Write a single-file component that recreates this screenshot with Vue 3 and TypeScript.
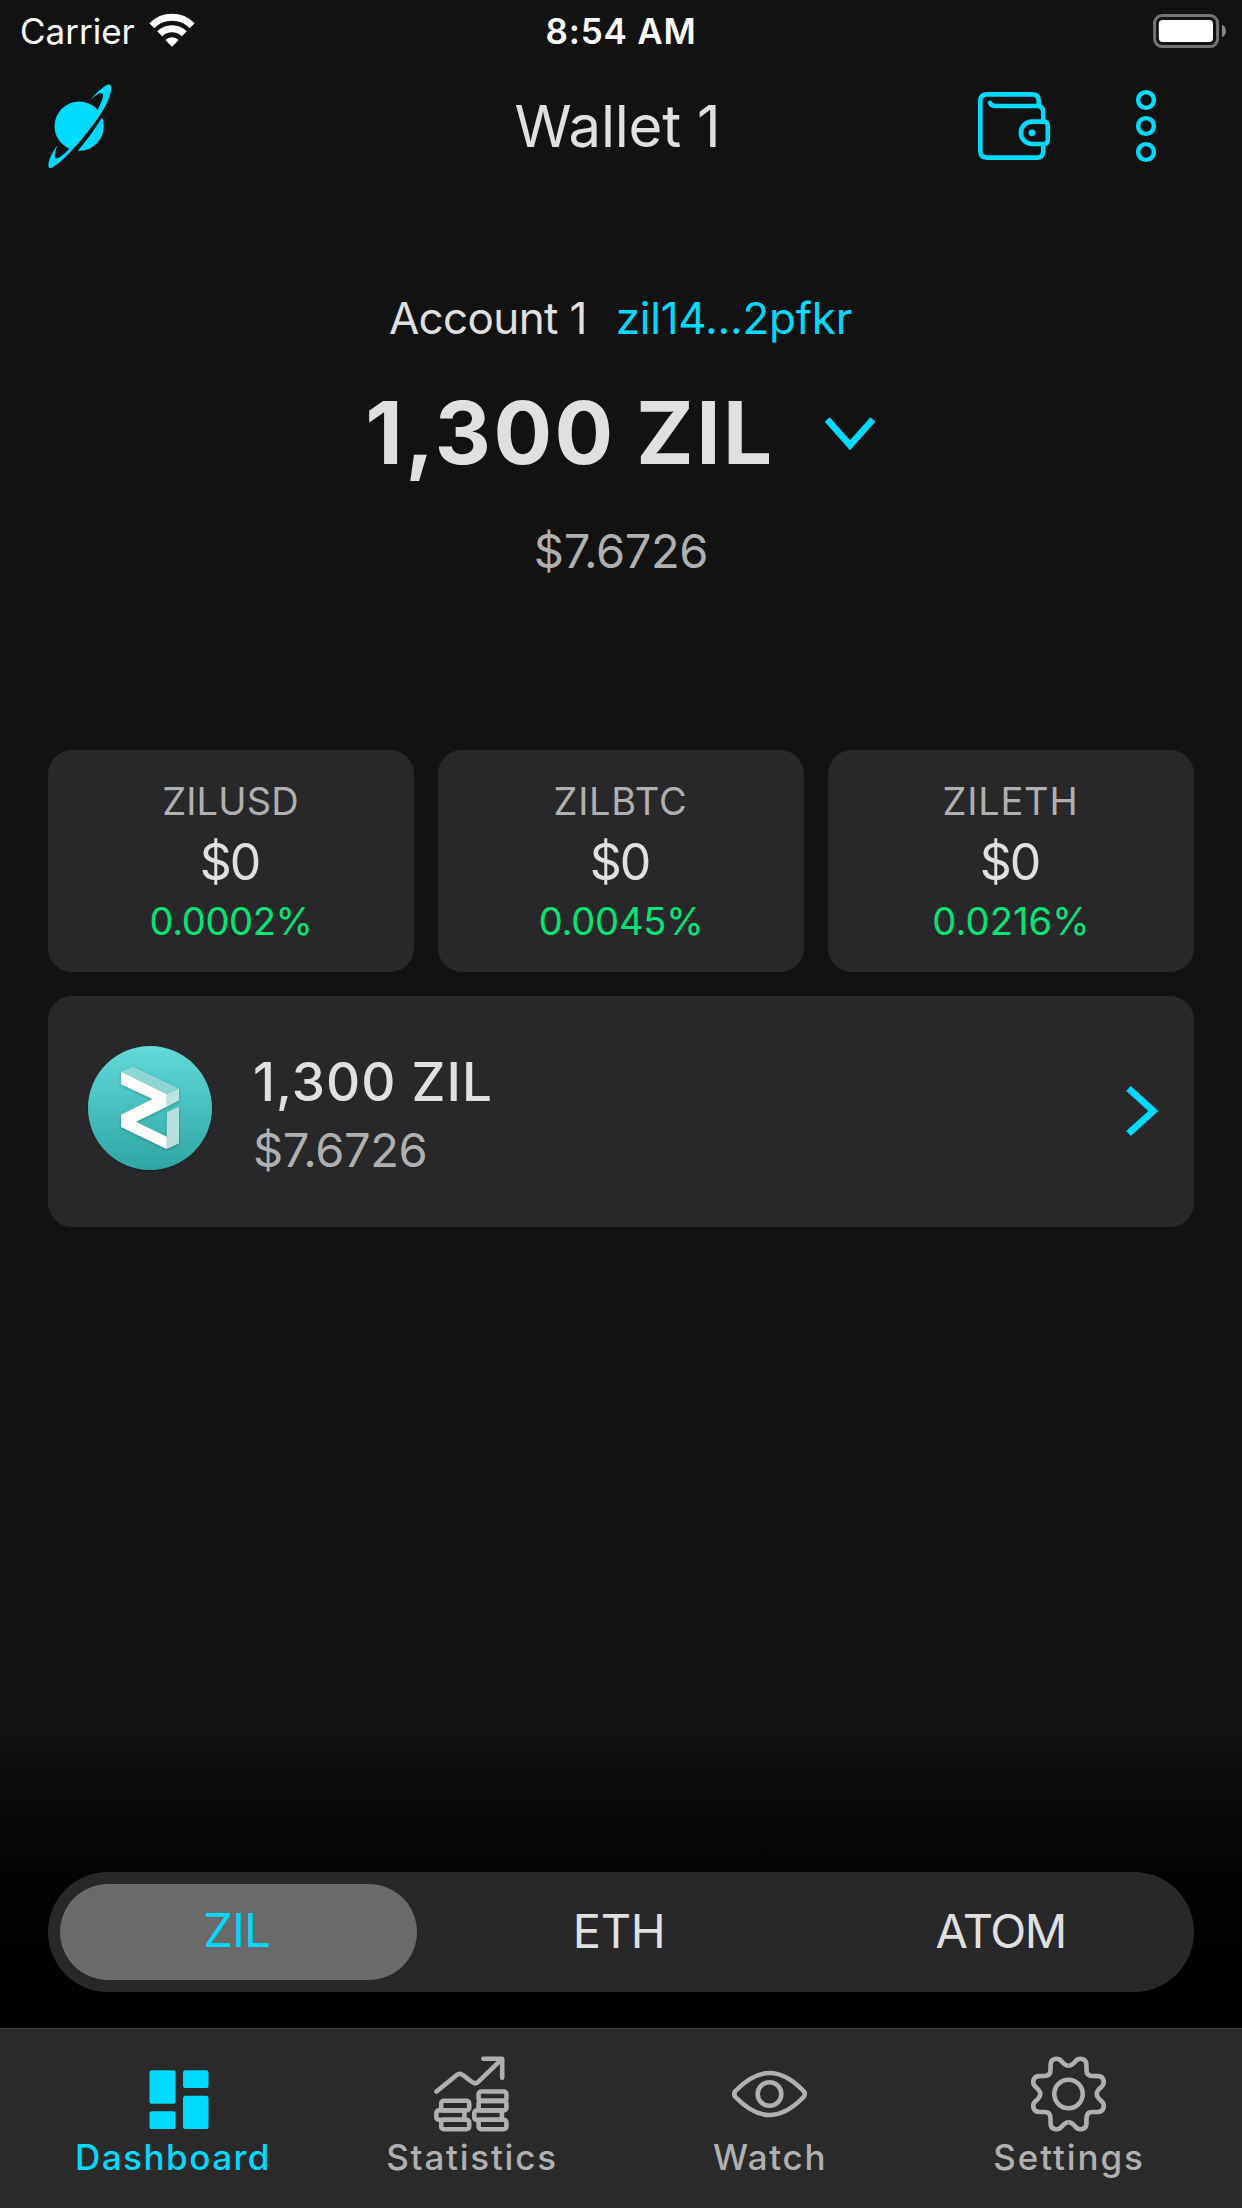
<script setup lang="ts">
interface Rate {
  pair: string
  price: string
  change: string
  pairSpacing: string
  changeSpacing: string
}

const rates: Rate[] = [
  { pair: 'ZILUSD', price: '$0', change: '0.0002%', pairSpacing: '0.15px', changeSpacing: '-0.35px' },
  { pair: 'ZILBTC', price: '$0', change: '0.0045%', pairSpacing: '0.76px', changeSpacing: '-0.18px' },
  { pair: 'ZILETH', price: '$0', change: '0.0216%', pairSpacing: '0.8px', changeSpacing: '0.14px' },
]
</script>

<template>
  <div class="screen">
    <div class="status">
      <div class="status-left">
        <span class="carrier">Carrier</span>
        <svg class="wifi" width="48" height="36" viewBox="444 34 144 108">
          <path d="M455.5 75 A85 85 0 0 1 576.5 75" fill="none" stroke="#fff" stroke-width="21" />
          <path d="M479 99.5 A52 52 0 0 1 553 99.5" fill="none" stroke="#fff" stroke-width="21" />
          <path d="M516 138 L496 118 A28 28 0 0 1 536 118 Z" fill="#fff" />
        </svg>
      </div>
      <span class="time">8:54 AM</span>
      <div class="status-right">
        <svg width="76" height="36" viewBox="1151 12 76 36">
          <rect x="1154.6" y="14.6" width="63" height="31" rx="7.5" fill="none" stroke="#747474" stroke-width="3" />
          <rect x="1158.8" y="19" width="54.2" height="22" rx="4" fill="#fff" />
          <path d="M1222 23.7 C1227.3 25.5 1227.3 34.5 1222 36.3 Z" fill="#878787" />
        </svg>
      </div>
    </div>

    <header class="header">
      <svg class="planet" width="66" height="88" viewBox="140 248 198 264">
        <circle cx="236.5" cy="377.5" r="74" fill="#00daff" />
        <path d="M306 333 Q270 395 215 458" fill="none" stroke="#121212" stroke-width="18" />
        <path
          d="M270 299 C291 273 318 251 328 252 C342 263 322 311 297 347 C271 385 243 420 216 448 C188 478 158 506 147 503 C140 497 145 471 171 435 C160 466 161 476 172 473 C181 471 195 458 206 446 L240 390 L293 327 C310 290 314 276 299 279 C291 281 281 288 270 299 Z"
          fill="#00daff"
        />
      </svg>
      <h1 class="title">Wallet 1</h1>
      <div class="actions">
        <svg width="76" height="76" viewBox="976 88 76 76" fill="none" stroke="#00daff" stroke-width="4.6" stroke-linecap="round" stroke-linejoin="round">
          <path d="M1038.7 104.5 V101 Q1038.7 94.4 1032 94.4 H987 Q980.3 94.4 980.3 101 V151 Q980.3 157.6 987 157.6 H1037 Q1043.2 157.6 1043.2 151 V145" />
          <path d="M990 102.8 Q991.2 106 995 106 H1037 Q1043.2 106 1043.2 112 V120" />
          <path d="M1032 121.6 H1043.5 Q1047.8 121.6 1047.8 126 V139.5 Q1047.8 144 1043.5 144 H1032 A11.2 11.2 0 0 1 1032 121.6 Z" />
          <circle cx="1032" cy="132.8" r="3.4" fill="#00daff" stroke="none" />
        </svg>
        <svg width="24" height="76" viewBox="1134 88 24 76" fill="none" stroke="#00daff" stroke-width="4.4">
          <circle cx="1146" cy="100" r="7.9" />
          <circle cx="1146" cy="126" r="7.9" />
          <circle cx="1146" cy="152" r="7.9" />
        </svg>
      </div>
    </header>

    <section class="account">
      <div class="account-row">
        <span class="account-name">Account 1</span>
        <span class="address">zil14...2pfkr</span>
      </div>
      <div class="balance-row">
        <span class="balance">1,300 ZIL</span>
        <svg width="54" height="38" viewBox="822 414 54 38">
          <path d="M826.2 419.5 L849 445.2 L871.8 419.5" fill="none" stroke="#00daff" stroke-width="6.6" />
        </svg>
      </div>
      <div class="fiat">$7.6726</div>
    </section>

    <section class="rates">
      <div v-for="r in rates" :key="r.pair" class="rate">
        <span class="pair" :style="{ letterSpacing: r.pairSpacing }">{{ r.pair }}</span>
        <span class="price">{{ r.price }}</span>
        <span class="change" :style="{ letterSpacing: r.changeSpacing }">{{ r.change }}</span>
      </div>
    </section>

    <section class="token">
      <svg class="token-logo" width="132" height="132" viewBox="162 186 396 396">
        <defs>
          <linearGradient id="coin" x1="0" y1="0" x2="0" y2="1">
            <stop offset="0" stop-color="#62dad8" />
            <stop offset="1" stop-color="#2ea6a4" />
          </linearGradient>
          <filter id="soft" x="-20%" y="-20%" width="140%" height="140%">
            <feDropShadow dx="0" dy="3" stdDeviation="4" flood-color="#000" flood-opacity="0.3" />
          </filter>
        </defs>
        <circle cx="360" cy="384" r="186" fill="url(#coin)" filter="url(#soft)" />
        <g filter="url(#soft)">
          <path d="M273 275 L309 260 L447 326 L410 343 Z" fill="#8dd6d3" />
          <path d="M410 343 L447 326 V361 L410 380 Z" fill="#bce3e1" />
          <path d="M411 397 L447 380 V490 L410 507 Z" fill="#b9e0de" />
          <path d="M273 275 L410 343 V380 L318 425 L410 470 V507 L273 441 V404 L368 357 L273 313 Z" fill="#fff" />
        </g>
      </svg>
      <div class="token-text">
        <span class="token-amount">1,300 ZIL</span>
        <span class="token-fiat">$7.6726</span>
      </div>
      <svg class="token-arrow" width="40" height="56" viewBox="1122 1083 40 56">
        <path d="M1128.5 1088.5 L1153.3 1111 L1128.5 1133.5" fill="none" stroke="#00daff" stroke-width="6.8" />
      </svg>
    </section>

    <div class="spacer"></div>

    <div class="bottom">
      <div class="segments">
        <div class="segment"><span class="pill">ZIL</span></div>
        <div class="segment eth">ETH</div>
        <div class="segment atom">ATOM</div>
      </div>
    </div>

    <nav class="tabs">
      <div class="tab active">
        <svg class="grid-icon" width="76" height="76" viewBox="140.5 2056 76 76" fill="#00daff">
          <rect x="149" y="2070.3" width="26" height="33.5" rx="2.6" />
          <rect x="182.5" y="2070.3" width="25.5" height="17.8" rx="2.6" />
          <rect x="149" y="2111.2" width="26" height="17.8" rx="2.6" />
          <rect x="182.5" y="2095.7" width="25.5" height="33.3" rx="2.6" />
        </svg>
        <span class="label l1">Dashboard</span>
      </div>
      <div class="tab">
        <svg width="76" height="76" viewBox="434 2055.5 76 76" fill="none" stroke="#b0b0b0" stroke-width="4.6" stroke-linecap="round" stroke-linejoin="round">
          <path d="M436.5 2091 L456.5 2074.7 Q459.7 2072 463 2074.7 L472 2081.5 Q475.7 2084.3 479 2080.7 L501 2059.3" />
          <path d="M483.3 2058.3 H502.2 V2077.2" />
          <rect x="441.2" y="2100.3" width="28" height="9.6" rx="2.6" />
          <rect x="436.4" y="2109.9" width="28" height="9.4" rx="2.6" />
          <rect x="441.2" y="2119.3" width="28" height="9.4" rx="2.6" />
          <rect x="478.6" y="2091" width="27.8" height="9.4" rx="2.6" />
          <rect x="478.6" y="2100.4" width="27.8" height="9.5" rx="2.6" />
          <rect x="474.3" y="2109.9" width="27.6" height="9.4" rx="2.6" />
          <rect x="478.6" y="2119.3" width="27.8" height="9.4" rx="2.6" />
        </svg>
        <span class="label l2">Statistics</span>
      </div>
      <div class="tab">
        <svg width="76" height="76" viewBox="732 2055.5 76 76" fill="none" stroke="#b0b0b0" stroke-width="4.6">
          <path d="M735.4 2090.5 C748 2077.5 758 2072.5 769.5 2072.5 S791 2077.5 803.6 2090.5 Q806 2093.5 803.6 2096.5 C791 2109.5 781 2114.5 769.5 2114.5 S748 2109.5 735.4 2096.5 Q733 2093.5 735.4 2090.5 Z" />
          <circle cx="769.5" cy="2093.5" r="11.8" />
        </svg>
        <span class="label l3">Watch</span>
      </div>
      <div class="tab">
        <svg width="76" height="76" viewBox="-38.5 -38 76 76" fill="none" stroke="#b0b0b0" stroke-width="4.6">
          <g v-for="a in [0, 90, 180, 270]" :key="a" :transform="`rotate(${a})`">
            <path d="M0 -28.2 C3 -28.2 4.8 -30.2 7 -32.8 C10.5 -37 17.6 -35.5 17.9 -30 L18 -24 C18 -20 20 -18 24 -18 L30 -17.9 C35.5 -17.6 37 -10.5 32.8 -7 C30.2 -4.8 28.2 -3 28.2 0" />
          </g>
          <circle r="14.2" />
        </svg>
        <span class="label l4">Settings</span>
      </div>
    </nav>
  </div>
</template>

<style>
body {
  margin: 0;
  background: #121212;
}
</style>

<style scoped>
.screen {
  display: flex;
  flex-direction: column;
  width: 1242px;
  height: 2208px;
  overflow: hidden;
  background: #121212;
  color: #e0e0e0;
  font-family: "Inter", "Liberation Sans", sans-serif;
  white-space: nowrap;
}
svg {
  display: block;
  flex: none;
}
.status {
  display: grid;
  grid-template-columns: 1fr auto 1fr;
  align-items: center;
  height: 62px;
  padding: 0 15px 0 20px;
  color: #fff;
  font-size: 35px;
  line-height: 62px;
}
.status-left {
  display: flex;
  align-items: center;
}
.wifi {
  margin: -3px 0 0 13px;
}
.time {
  font-weight: 600;
  letter-spacing: 0.8px;
  margin-left: -5px;
}
.status-right {
  display: flex;
  justify-content: flex-end;
}
.header {
  display: grid;
  grid-template-columns: 1fr auto 1fr;
  align-items: center;
  height: 128px;
  padding: 0 84px 0 47px;
}
.planet {
  margin-top: 1px;
}
.title {
  margin: 0 0 0 30px;
  font-size: 58px;
  font-weight: 400;
  line-height: 128px;
  letter-spacing: -0.2px;
}
.actions {
  display: flex;
  justify-content: flex-end;
  gap: 82px;
}
.account {
  display: flex;
  flex-direction: column;
  align-items: center;
  margin-top: 100px;
}
.account-row {
  display: flex;
  gap: 29px;
  margin-left: -1px;
  font-size: 44px;
  line-height: 56px;
}
.account-name {
  letter-spacing: -0.66px;
}
.address {
  color: #00daff;
  letter-spacing: -0.22px;
}
.balance-row {
  display: flex;
  align-items: center;
  gap: 48px;
  height: 104px;
  margin-top: 35px;
}
.balance {
  font-size: 87px;
  font-weight: 700;
  line-height: 104px;
  letter-spacing: 2.5px;
  word-spacing: -3px;
}
.fiat {
  margin-top: 38px;
  color: #b0b0b0;
  font-size: 47px;
  line-height: 56px;
  letter-spacing: -0.36px;
}
.rates {
  display: flex;
  gap: 24px;
  margin: 171px 48px 0;
}
.rate {
  display: flex;
  flex: 1;
  flex-direction: column;
  align-items: center;
  height: 195px;
  padding-top: 27px;
  border-radius: 24px;
  background: #28282a;
}
.pair {
  margin-left: -1px;
  color: #b0b0b0;
  font-size: 38px;
  line-height: 48px;
}
.price {
  margin-top: 7px;
  margin-left: -3px;
  font-size: 50px;
  line-height: 60px;
  letter-spacing: -2px;
}
.change {
  margin-top: 5px;
  color: #00e676;
  font-size: 38px;
  line-height: 48px;
}
.token {
  display: flex;
  align-items: center;
  height: 231px;
  margin: 24px 48px 0;
  padding: 0 32px 0 36px;
  border-radius: 24px;
  background: #28282a;
}
.token-logo {
  margin-top: -7px;
}
.token-text {
  display: flex;
  flex: 1;
  flex-direction: column;
  margin-top: 8px;
  margin-left: 37px;
}
.token-amount {
  font-size: 53px;
  font-weight: 500;
  line-height: 68px;
  letter-spacing: 1px;
}
.token-fiat {
  color: #b0b0b0;
  font-size: 47px;
  line-height: 68px;
  letter-spacing: -0.36px;
}
.token-arrow {
  margin-top: -2px;
}
.spacer {
  flex: 1;
}
.bottom {
  height: 156px;
  padding: 144px 48px 0;
  background: linear-gradient(#121212 0, #030303 144px, #000 300px);
}
.segments {
  display: flex;
  height: 120px;
  border-radius: 60px;
  background: #28282a;
  font-size: 47px;
}
.segment {
  flex: 1;
  box-sizing: border-box;
  line-height: 118px;
  text-align: center;
}
.pill {
  display: block;
  box-sizing: border-box;
  height: 96px;
  margin: 12px;
  padding-right: 3px;
  border-radius: 48px;
  background: #6a6a6a;
  color: #00daff;
  line-height: 92px;
  letter-spacing: -0.6px;
}
.eth {
  padding-right: 1px;
  letter-spacing: -0.3px;
}
.atom {
  padding-right: 3px;
  letter-spacing: -1.4px;
}
.tabs {
  display: flex;
  box-sizing: border-box;
  height: 180px;
  padding: 27px 25px 0;
  border-top: 1px solid #3d3d3f;
  background: #2a2a2a;
}
.tab {
  display: flex;
  flex: 1;
  flex-direction: column;
  align-items: center;
  color: #b0b0b0;
}
.active {
  color: #00daff;
}
.grid-icon {
  margin-left: 9px;
}
.label {
  margin-top: 4px;
  font-size: 35px;
  font-weight: 500;
  line-height: 42px;
}
.l1 {
  letter-spacing: 1.5px;
  margin-left: -2px;
}
.l2 {
  letter-spacing: 1.77px;
}
.l3 {
  letter-spacing: 1.65px;
}
.l4 {
  letter-spacing: 1.9px;
  margin-left: 2px;
}
</style>
